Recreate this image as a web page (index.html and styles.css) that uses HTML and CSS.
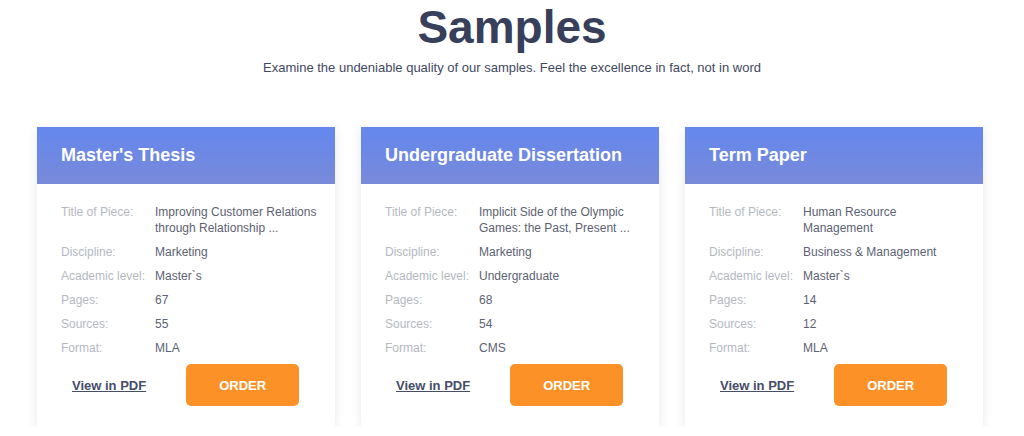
FILE: index.html
```html
<!DOCTYPE html>
<html lang="en">
<head>
<meta charset="utf-8">
<title>Samples</title>
<link rel="stylesheet" href="styles.css">
</head>
<body>
<section class="samples">
  <h1 class="title">Samples</h1>
  <p class="subtitle">Examine the undeniable quality of our samples. Feel the excellence in fact, not in word</p>
  <div class="cards">
    <article class="card">
      <header class="card-head"><h2>Master's Thesis</h2></header>
      <div class="card-body">
        <dl class="info">
          <dt>Title of Piece:</dt><dd>Improving Customer Relations through Relationship ...</dd>
          <dt>Discipline:</dt><dd>Marketing</dd>
          <dt>Academic level:</dt><dd>Master`s</dd>
          <dt>Pages:</dt><dd>67</dd>
          <dt>Sources:</dt><dd>55</dd>
          <dt>Format:</dt><dd>MLA</dd>
        </dl>
        <div class="actions">
          <a class="pdf" href="#">View in PDF</a>
          <a class="order" href="#">ORDER</a>
        </div>
      </div>
    </article>
    <article class="card">
      <header class="card-head"><h2>Undergraduate Dissertation</h2></header>
      <div class="card-body">
        <dl class="info">
          <dt>Title of Piece:</dt><dd>Implicit Side of the Olympic Games: the Past, Present ...</dd>
          <dt>Discipline:</dt><dd>Marketing</dd>
          <dt>Academic level:</dt><dd>Undergraduate</dd>
          <dt>Pages:</dt><dd>68</dd>
          <dt>Sources:</dt><dd>54</dd>
          <dt>Format:</dt><dd>CMS</dd>
        </dl>
        <div class="actions">
          <a class="pdf" href="#">View in PDF</a>
          <a class="order" href="#">ORDER</a>
        </div>
      </div>
    </article>
    <article class="card">
      <header class="card-head"><h2>Term Paper</h2></header>
      <div class="card-body">
        <dl class="info">
          <dt>Title of Piece:</dt><dd>Human Resource Management</dd>
          <dt>Discipline:</dt><dd>Business &amp; Management</dd>
          <dt>Academic level:</dt><dd>Master`s</dd>
          <dt>Pages:</dt><dd>14</dd>
          <dt>Sources:</dt><dd>12</dd>
          <dt>Format:</dt><dd>MLA</dd>
        </dl>
        <div class="actions">
          <a class="pdf" href="#">View in PDF</a>
          <a class="order" href="#">ORDER</a>
        </div>
      </div>
    </article>
  </div>
</section>
</body>
</html>
```

FILE: styles.css
```css
* { box-sizing: border-box; }

html, body {
  margin: 0;
  padding: 0;
  background: #ffffff;
  font-family: "Liberation Sans", Arial, sans-serif;
}

.samples {
  display: flex;
  flex-direction: column;
  align-items: center;
}

.title {
  margin: 4px 0 0;
  font-size: 46px;
  line-height: 46px;
  font-weight: 700;
  color: #373f5b;
}

.subtitle {
  margin: 8px 0 0;
  font-size: 13px;
  line-height: 20px;
  color: #3f4862;
}

.cards {
  align-self: flex-start;
  margin: 49px 0 0 37px;
  display: flex;
  gap: 26px;
}

.card {
  width: 298px;
  background: #ffffff;
  box-shadow: 0 2px 10px rgba(30, 40, 70, 0.10);
}

.card-head {
  height: 57px;
  display: flex;
  align-items: center;
  padding: 0 24px;
  background: linear-gradient(180deg, #6387ee 0%, #798ad9 100%);
}

.card-head h2 {
  margin: 0;
  font-size: 18px;
  font-weight: 700;
  color: #ffffff;
}

.card-body {
  padding: 20px 16px 21px 24px;
}

.info {
  margin: 0;
  display: grid;
  grid-template-columns: 94px 1fr;
  row-gap: 8px;
  font-size: 12px;
  line-height: 16px;
}

.info dt {
  color: #b4b8c2;
}

.info dd {
  margin: 0;
  color: #5c6272;
}

.actions {
  margin-top: 8px;
  padding-left: 11px;
  display: flex;
  align-items: center;
  gap: 40px;
}

.pdf {
  font-size: 13px;
  font-weight: 700;
  color: #454d68;
  text-decoration: underline;
}

.order {
  width: 113px;
  height: 42px;
  display: flex;
  align-items: center;
  justify-content: center;
  background: #fc9227;
  border-radius: 5px;
  color: #ffffff;
  font-size: 13px;
  font-weight: 700;
  text-decoration: none;
}
```
